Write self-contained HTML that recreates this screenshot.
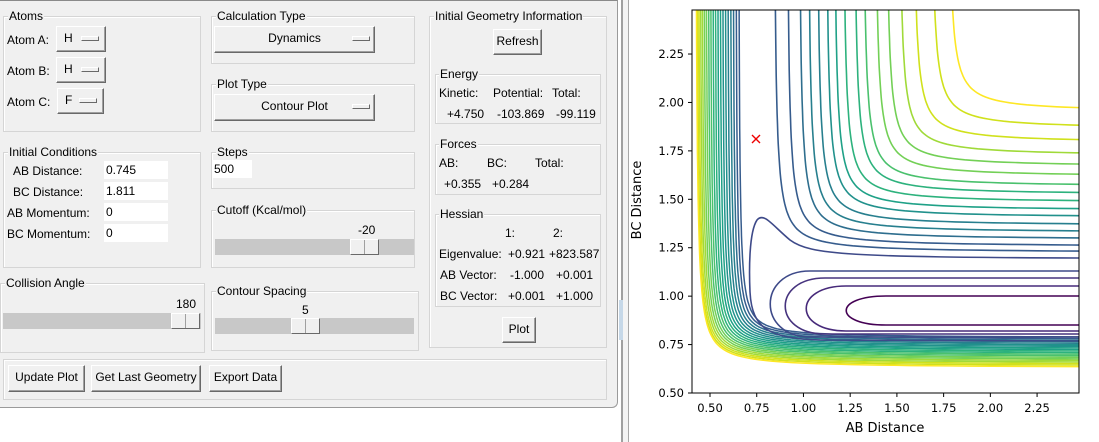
<!DOCTYPE html>
<html><head><meta charset="utf-8"><style>
*{box-sizing:border-box;margin:0;padding:0}
body{width:1099px;height:442px;position:relative;background:#fff;font-family:"Liberation Sans",sans-serif;font-size:12px;color:#000;overflow:hidden}
#win{position:absolute;left:0;top:0;width:618px;height:408px;background:#f0f0f0;border-top:1px solid #8a8a8a;border-right:1px solid #9a9a9a;border-bottom:1px solid #9a9a9a;border-bottom-right-radius:6px}
.a{position:absolute;white-space:nowrap}
.g{position:absolute;border:1px solid #d5d5d5;box-shadow:1px 1px 0 #fff inset}
.gl{position:absolute;top:-8px;left:4px;background:#f0f0f0;padding:0 1px;line-height:14px}
.b{position:absolute;background:#f0f0f0;border:1px solid;border-color:#fff #696969 #696969 #fff;box-shadow:inset -1px -1px 0 #a0a0a0;text-align:center;line-height:23px}
.ind{position:absolute;width:18px;height:5px;border:1px solid;border-color:#fff #696969 #696969 #fff;background:#f0f0f0;top:9px}
.e{position:absolute;background:#fff;height:18px;padding-left:2px;line-height:18px}
.tr{position:absolute;background:#c8c8c8}
.th{position:absolute;top:0;height:100%;width:29px;background:#f0f0f0;border:1px solid;border-color:#fff #696969 #696969 #fff}
.th:after{content:"";position:absolute;left:13px;top:0;height:100%;border-left:1px solid #a0a0a0}
</style></head><body>
<div id="win">
 <div class="g" style="left:3px;top:15px;width:198px;height:116px"><span class="gl">Atoms</span></div>
 <div class="a" style="left:7px;top:32px">Atom A:</div>
 <div class="b" style="left:56px;top:25px;width:50px;height:26px;text-align:left;padding-left:7px">H<div class="ind" style="left:24px"></div></div>
 <div class="a" style="left:7px;top:63px">Atom B:</div>
 <div class="b" style="left:56px;top:56px;width:50px;height:26px;text-align:left;padding-left:7px">H<div class="ind" style="left:24px"></div></div>
 <div class="a" style="left:7px;top:94px">Atom C:</div>
 <div class="b" style="left:57px;top:87px;width:47px;height:26px;text-align:left;padding-left:7px">F<div class="ind" style="left:21px"></div></div>

 <div class="g" style="left:211px;top:15px;width:204px;height:48px"><span class="gl">Calculation Type</span></div>
 <div class="b" style="left:214px;top:25px;width:161px;height:27px">Dynamics<div class="ind" style="left:137px"></div></div>
 <div class="g" style="left:211px;top:83px;width:204px;height:48px"><span class="gl">Plot Type</span></div>
 <div class="b" style="left:214px;top:93px;width:161px;height:27px">Contour Plot<div class="ind" style="left:137px"></div></div>

 <div class="g" style="left:3px;top:151px;width:198px;height:116px"><span class="gl">Initial Conditions</span></div>
 <div class="a" style="left:13px;top:163px">AB Distance:</div><div class="e" style="left:104px;top:160px;width:64px">0.745</div>
 <div class="a" style="left:13px;top:184px">BC Distance:</div><div class="e" style="left:104px;top:181px;width:64px">1.811</div>
 <div class="a" style="left:7px;top:205px">AB Momentum:</div><div class="e" style="left:104px;top:202px;width:64px">0</div>
 <div class="a" style="left:7px;top:226px">BC Momentum:</div><div class="e" style="left:104px;top:223px;width:64px">0</div>

 <div class="g" style="left:211px;top:151px;width:204px;height:37px"><span class="gl">Steps</span></div>
 <div class="e" style="left:212px;top:159px;width:40px">500</div>
 <div class="g" style="left:211px;top:209px;width:204px;height:58px"><span class="gl">Cutoff (Kcal/mol)</span></div>
 <div class="a" style="left:358px;top:222px">-20</div>
 <div class="tr" style="left:215px;top:238px;width:199px;height:16px"><div class="th" style="left:135px"></div></div>

 <div class="g" style="left:0px;top:282px;width:205px;height:70px"><span class="gl">Collision Angle</span></div>
 <div class="a" style="left:176px;top:296px">180</div>
 <div class="tr" style="left:3px;top:312px;width:198px;height:16px"><div class="th" style="left:168px"></div></div>
 <div class="g" style="left:211px;top:290px;width:208px;height:60px"><span class="gl">Contour Spacing</span></div>
 <div class="a" style="left:302px;top:302px">5</div>
 <div class="tr" style="left:215px;top:317px;width:199px;height:16px"><div class="th" style="left:76px"></div></div>

 <div class="g" style="left:429px;top:15px;width:178px;height:332px"><span class="gl">Initial Geometry Information</span></div>
 <div class="b" style="left:493px;top:28px;width:49px;height:26px">Refresh</div>
 <div class="g" style="left:435px;top:73px;width:166px;height:50px"><span class="gl" style="left:3px">Energy</span></div>
 <div class="a" style="left:439px;top:85px">Kinetic:</div><div class="a" style="left:493px;top:85px">Potential:</div><div class="a" style="left:552px;top:85px">Total:</div>
 <div class="a" style="left:447px;top:106px">+4.750</div><div class="a" style="left:497px;top:106px">-103.869</div><div class="a" style="left:556px;top:106px">-99.119</div>
 <div class="g" style="left:435px;top:143px;width:166px;height:51px"><span class="gl" style="left:3px">Forces</span></div>
 <div class="a" style="left:439px;top:155px">AB:</div><div class="a" style="left:487px;top:155px">BC:</div><div class="a" style="left:535px;top:155px">Total:</div>
 <div class="a" style="left:444px;top:176px">+0.355</div><div class="a" style="left:492px;top:176px">+0.284</div>
 <div class="g" style="left:435px;top:213px;width:166px;height:93px"><span class="gl" style="left:3px">Hessian</span></div>
 <div class="a" style="left:505px;top:225px">1:</div><div class="a" style="left:553px;top:225px">2:</div>
 <div class="a" style="left:439px;top:246px">Eigenvalue:</div><div class="a" style="left:508px;top:246px">+0.921</div><div class="a" style="left:549px;top:246px">+823.587</div>
 <div class="a" style="left:440px;top:267px">AB Vector:</div><div class="a" style="left:510px;top:267px">-1.000</div><div class="a" style="left:556px;top:267px">+0.001</div>
 <div class="a" style="left:440px;top:288px">BC Vector:</div><div class="a" style="left:508px;top:288px">+0.001</div><div class="a" style="left:556px;top:288px">+1.000</div>
 <div class="b" style="left:502px;top:316px;width:34px;height:26px">Plot</div>

 <div class="g" style="left:3px;top:358px;width:604px;height:41px"></div>
 <div class="b" style="left:8px;top:364px;width:77px;height:27px">Update Plot</div>
 <div class="b" style="left:91px;top:364px;width:110px;height:27px">Get Last Geometry</div>
 <div class="b" style="left:209px;top:364px;width:73px;height:27px">Export Data</div>
</div>
<div style="position:absolute;left:621px;top:0;width:2px;height:442px;background:#a0a0a0"></div>
<div style="position:absolute;left:623px;top:0;width:5px;height:442px;background:#f4f4f4"></div>
<div style="position:absolute;left:628px;top:0;width:1px;height:442px;background:#a8a8a8"></div>
<div style="position:absolute;left:619px;top:300px;width:4px;height:40px;background:#c6d8e8"></div>

<svg style="position:absolute;left:0;top:0" width="1099" height="442" font-family="DejaVu Sans,sans-serif" font-size="11.5">
 <defs><clipPath id="cp"><rect x="692" y="10" width="387" height="383"/></clipPath></defs>
 <g id="c" clip-path="url(#cp)" fill="none" stroke-width="1.6"></g>
 <path d="M752 135l8 8M760 135l-8 8" stroke="#e00" stroke-width="1.4"/>
 <rect x="692" y="10" width="387" height="383" fill="none" stroke="#000" stroke-width="1"/>
 <g stroke="#000" id="tk"></g>
 <g id="tl"></g>
 <text x="885" y="432" text-anchor="middle" font-size="13">AB Distance</text>
 <text transform="translate(641,200) rotate(-90)" text-anchor="middle" font-size="13">BC Distance</text>
</svg>
<script>
var vir=["#fde725","#d0e11c","#a0da39","#73d056","#4ac16d","#2db27d","#1fa187","#21918c","#277f8e","#2e6e8e","#365c8d","#3f4788","#46327e","#481d6f","#440154"];
function vc(t){return vir[Math.max(0,Math.min(14,Math.round(t*14)))];}
var g=document.getElementById('c'),h='';
function hyp(v,hh,r,col,w){var d='';for(var s=-6;s<=6;s+=0.08){var x=v+r*Math.exp(s),y=hh-r*Math.exp(-s);d+=(d?'L':'M')+x.toFixed(1)+' '+y.toFixed(1);}h+='<path d="'+d+'" stroke="'+col+'"'+(w?' stroke-width="'+w+'"':'')+'/>';}
var V=[947,930,912,898,885,874,862,853,842,833,825,816,807,798,786,773],H=[112,129,143,156,167,177,187,195,203,211,218,226,233,240,247,253];
for(var i=0;i<V.length;i++){hyp(V[i],H[i],24,vc(i/V.length*0.78));}
var n=20;for(var i=n-1;i>=0;i--){var t=i/(n-1);var tt=Math.pow(t,1.25);hyp(695+tt*43,368-t*30,23-t*4,vc(t*0.72),1.5);}
h+='<path d="M1079 258 C850 257 810 255 790 240 C772 225 764 212 757 220 C749 232 749 270 750 292 C752 330 770 338 820 340 L1079 341" stroke="#3e4a89"/>';
function U(nx,t,b,c){h+='<path d="M1079 '+t+' L'+(nx+40)+' '+t+' C'+(nx-13)+' '+t+' '+(nx-13)+' '+b+' '+(nx+40)+' '+b+' L1079 '+b+'" stroke="'+c+'"/>';}
U(770,271,337,"#3e4a89");U(785,278,334,"#46337e");U(806,286,331,"#472a7a");U(846,296,325,"#440154");
g.innerHTML=h;
var tk='',tl='';
[0.5,0.75,1,1.25,1.5,1.75,2,2.25].forEach(function(v){var x=710+(v-0.5)*186.9;tk+='<line x1="'+x+'" y1="393" x2="'+x+'" y2="397"/>';tl+='<text x="'+x+'" y="412" text-anchor="middle">'+v.toFixed(2)+'</text>';});
[0.5,0.75,1,1.25,1.5,1.75,2,2.25].forEach(function(v){var y=393-(v-0.5)*193.7;tk+='<line x1="688" y1="'+y+'" x2="692" y2="'+y+'"/>';tl+='<text x="684" y="'+(y+4)+'" text-anchor="end">'+v.toFixed(2)+'</text>';});
document.getElementById('tk').innerHTML=tk;document.getElementById('tl').innerHTML=tl;
</script>
</body></html>
